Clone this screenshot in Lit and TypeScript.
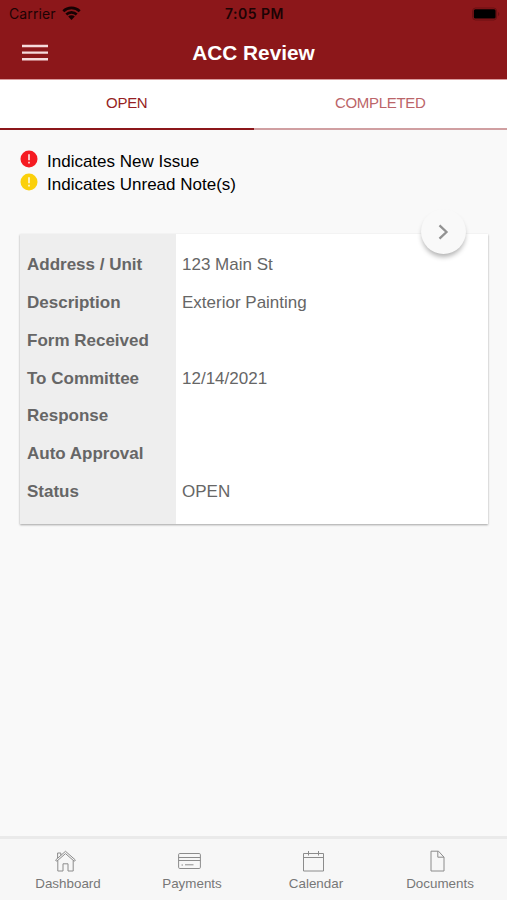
import { LitElement, html, css, svg } from "lit";
import { customElement } from "lit/decorators.js";

const rows: [string, string][] = [
  ["Address / Unit", "123 Main St"],
  ["Description", "Exterior Painting"],
  ["Form Received", ""],
  ["To Committee", "12/14/2021"],
  ["Response", ""],
  ["Auto Approval", ""],
  ["Status", "OPEN"],
];

const navItems = [
  {
    label: "Dashboard",
    icon: svg`<path d="M1.600 10 11.500 1.300 21.400 10l-1.100 1.300-8.800-7.700-8.800 7.700zM3.800 10.500V21h5.200v-7.200h5V21h5.200V10.500M3.600 8.200V3h3.200v2.400"/>`,
  },
  {
    label: "Payments",
    icon: svg`<rect x=".6" y="3.500" width="21.800" height="15" rx="1.200"/><path d="M.6 7.500h21.800M.6 10.500h21.800M3.500 15h1.500M7 14.800h8.500"/>`,
  },
  {
    label: "Calendar",
    icon: svg`<path d="M1.500 3.500h20v17.500h-20zM1.500 7.500h20M6.500 1v4.500M16.500 1v4.500"/>`,
  },
  {
    label: "Documents",
    icon: svg`<path d="M5 1.200h7.500l5.500 6V21H5zM11.800 1.200v6H18"/>`,
  },
];

@customElement("app-root")
export class AppRoot extends LitElement {
  static styles = css`
    :host {
      display: flex;
      flex-direction: column;
      height: 900px;
      overflow: hidden;
      background: #f9f9f9;
      font-family: "Liberation Sans", Arial, sans-serif;
      color: #666;
    }
    svg { display: block; flex: none; }
    .header { background: #8c171a; height: 79px; flex: none; }
    .status {
      height: 27px;
      display: grid;
      grid-template-columns: 1fr auto 1fr;
      align-items: center;
      padding: 0 7px 0 9px;
      color: #1c0304;
      font: 14px/27px Inter, sans-serif;
    }
    .carrier { display: flex; align-items: center; gap: 6px; letter-spacing: 0.1px; }
    .carrier svg { margin-top: -2px; }
    .time { font-weight: 600; letter-spacing: 0.5px; }
    .battery { justify-self: end; }
    .bar {
      height: 51px;
      display: grid;
      grid-template-columns: 1fr auto 1fr;
      align-items: center;
      padding: 0 22px;
    }
    .title { margin: 0; color: #fff; font-size: 20.800px; line-height: 25px; font-weight: 700; }
    .tabs { display: flex; height: 51px; flex: none; background: #fff; border-top: 1px solid #d99b9d; box-sizing: border-box; }
    .tab {
      flex: 1;
      text-align: center;
      font-size: 15px;
      letter-spacing: -0.3px;
      line-height: 46px;
      color: #bb6569;
      border-bottom: 2px solid #d09fa1;
    }
    .tab.active { color: #961f23; border-color: #8c171a; }
    .legend { padding: 20px 20px 0; color: #000; font-size: 17px; }
    .entry { display: flex; height: 23px; line-height: 24px; gap: 9px; }
    .card {
      position: relative;
      display: grid;
      grid-template-columns: 156px 1fr;
      margin: 38px 19px 0 20px;
      height: 290px;
      background: #fff;
      box-shadow: 0 1px 2px rgba(0, 0, 0, 0.35);
      font-size: 17px;
      line-height: 37.850px;
    }
    .col { padding: 12px 6px 0; }
    .names { background: #eee; font-weight: 700; padding-left: 7px; }
    .cell { height: 37.850px; white-space: nowrap; }
    .next {
      position: absolute;
      right: 22px;
      top: -25px;
      width: 45px;
      height: 45px;
      border-radius: 50%;
      background: #f9f9f9;
      box-shadow: 0 4px 5px -1px rgba(0, 0, 0, 0.3);
      display: grid;
      place-items: center;
    }
    .nav {
      display: flex;
      margin-top: auto;
      height: 64px;
      box-sizing: border-box;
      border-top: 3px solid #eaeaea;
      background: #f7f7f7;
      padding: 0 5px 0 6px;
    }
    .item { flex: 1; display: flex; flex-direction: column; align-items: center; padding-top: 11px; font-size: 13.400px; line-height: 16px; color: #777; }
    .item svg { margin-right: 5px; margin-bottom: 4px; }
  `;

  private alert(color: string) {
    return html`<svg width="18" height="18" viewBox="0 0 18 18">
      <circle cx="9" cy="9" r="8.500" fill=${color} />
      <path d="M9 4.300v5.900M9 11.700v1.800" stroke="#fff" stroke-opacity=".85" stroke-width="1.700" />
    </svg>`;
  }

  render() {
    return html`
      <header class="header">
        <div class="status">
          <span class="carrier"><span>Carrier</span>
            <svg width="19" height="14" viewBox="0 0 19 14" fill="none" stroke="#160203" stroke-width="2.600">
              <path d="M1.300 5.200a11.700 11.700 0 0 1 16.400 0M4.300 8.500a7.400 7.400 0 0 1 10.400 0" />
              <path d="M6.200 10.600a4.500 4.500 0 0 1 6.600 0L9.500 14z" fill="#160203" stroke="none" />
            </svg>
          </span>
          <span class="time">7:05 PM</span>
          <svg class="battery" width="28" height="14" viewBox="0 0 28 14">
            <rect x=".6" y="1" width="24" height="12" rx="3" fill="none" stroke="#6b1013" />
            <rect x="1.800" y="2.300" width="21.800" height="9.300" rx="1.500" fill="#000" />
            <path d="M26 5v4q1.300-.6 1.300-2T26 5" fill="#6b1013" />
          </svg>
        </div>
        <div class="bar">
          <svg width="26" height="18" viewBox="0 0 26 18" stroke="#f6dadb" stroke-width="2.400">
            <path d="M0 2h26M0 8.600h26M0 15.200h26" />
          </svg>
          <h1 class="title">ACC Review</h1>
        </div>
      </header>
      <div class="tabs">
        <div class="tab active">OPEN</div>
        <div class="tab">COMPLETED</div>
      </div>
      <div class="legend">
        <div class="entry">${this.alert("#f51b22")}<span>Indicates New Issue</span></div>
        <div class="entry">${this.alert("#fbd00b")}<span>Indicates Unread Note(s)</span></div>
      </div>
      <section class="card">
        <div class="col names">${rows.map(([name]) => html`<div class="cell">${name}</div>`)}</div>
        <div class="col">${rows.map(([, value]) => html`<div class="cell">${value}</div>`)}</div>
        <div class="next">
          <svg width="12" height="18" viewBox="0 0 12 18" fill="none" stroke="#929292" stroke-width="2.300">
            <path d="M1.500 2.300 8.500 9l-7 6.700" />
          </svg>
        </div>
      </section>
      <nav class="nav">
        ${navItems.map(
          (item) => html`<div class="item">
            <svg width="23" height="22" viewBox="0 0 23 22" fill="none" stroke="#8c8c8c">${item.icon}</svg>
            <span>${item.label}</span>
          </div>`
        )}
      </nav>
    `;
  }
}
